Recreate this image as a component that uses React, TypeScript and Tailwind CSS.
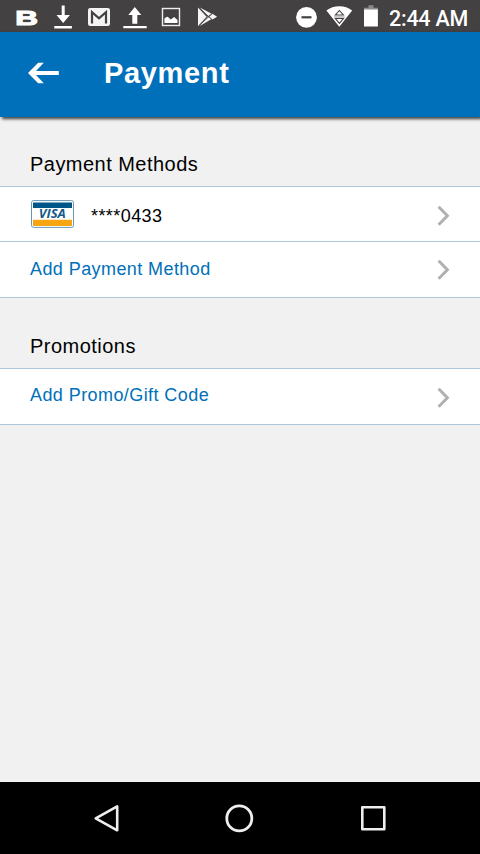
import React from "react";

function StatusBar() {
  return (
    <div className="flex h-8 shrink-0 items-center bg-[#434141] text-white">
      <div className="ml-[15px] flex h-8 w-[24px] items-center justify-center pt-[3px]">
        <span className="inline-block scale-x-[1.5] font-['Liberation_Sans',sans-serif] text-[21px] leading-8 font-bold [-webkit-text-stroke:1.1px_white]">B</span>
      </div>
      <svg className="ml-[14px] shrink-0" width="20" height="32" viewBox="53 0 20 32" fill="#fff">
        <path d="M61.7 5.5h3v9.5h5.2L63.2 23l-6.7-8h5.2zM54.3 26h17.6v2.4H54.3z" />
      </svg>
      <svg className="ml-[14px] shrink-0" width="25" height="32" viewBox="87 0 25 32" fill="none">
        <rect x="88" y="8" width="22" height="18" rx="2.2" fill="#f4f4f4" />
        <path d="M92 23.6V12.2l7 6.2 7-6.2v11.4" stroke="#434141" strokeWidth="2.2" />
      </svg>
      <svg className="ml-[10px] shrink-0" width="26" height="32" viewBox="122 0 26 32" fill="#fff">
        <path d="M134.8 7l6.5 8h-4v8.7h-5V15h-4zM123.3 26h23.4v2.3h-23.4z" />
      </svg>
      <svg className="ml-[13px] shrink-0" width="20" height="32" viewBox="161 0 20 32">
        <rect x="162.5" y="8.5" width="17" height="17" fill="none" stroke="#eee" strokeWidth="1.4" />
        <path d="M164.4 23v-4.5l1.7-1.2 1.6-.6 3 2.8 3.5-2.5 3.3 3V23z" fill="#fff" />
      </svg>
      <svg className="ml-[16px] shrink-0" width="21" height="32" viewBox="197 0 21 32" fill="none">
        <path d="M198 7.5l8.6 9.2-8.6 9.6z" fill="#f5f5f5" />
        <path d="M199.7 7.5l12 6.3-3.8 2.4zM199.7 26l12-7-3.8-2.5zM209 16.6l3.5-2.8 4.6 2.9-4.6 2.7z" fill="#f5f5f5" />
        <path d="M199 7.8l13.2 12M199 25.6l13.2-12" stroke="#434141" strokeWidth="0.9" />
      </svg>
      <svg className="ml-[78px] shrink-0" width="22" height="32" viewBox="296 0 22 32">
        <circle cx="306.5" cy="17.3" r="10.4" fill="#fff" />
        <path d="M301.5 17.3h10" stroke="#434141" strokeWidth="2.2" />
      </svg>
      <svg className="ml-[8px] shrink-0" width="28" height="32" viewBox="326 0 28 32">
        <path d="M326.4 10.5c7-5.8 18.8-5.8 25.8 0l-12.9 16.3z" fill="#fff" />
        <path d="M335.4 15h8l-4-4.5zM335.2 18.4h8.4l-4.2 5z" fill="none" stroke="#434141" strokeWidth="1.1" />
        <path d="M334 16.7h10.6" stroke="#bbb" strokeWidth="1" />
      </svg>
      <svg className="ml-[9px] shrink-0" width="16" height="32" viewBox="363 0 16 32">
        <path d="M368.5 5.3h5v2.4h4.4v2.5H364V7.7h4.5z" fill="#8b8a8a" />
        <path d="M364 9.5h13.9v17H364z" fill="#fff" />
      </svg>
      <span className="ml-[10px] mt-[5px] whitespace-nowrap font-['Roboto',sans-serif] text-[21.5px] leading-8 font-medium tracking-[-0.25px]">2:44 AM</span>
    </div>
  );
}

function VisaCard() {
  return (
    <svg className="mr-[16px] shrink-0" width="44" height="28" viewBox="0 0 44 28" role="img" aria-label="Visa">
      <rect x="0.5" y="0.6" width="42" height="26.8" rx="2" fill="#fff" stroke="#6896b5" strokeWidth="1" />
      <path d="M2 2.5h39v5.5H2z" fill="#005689" />
      <path d="M2 19.7h39v6.3H2z" fill="#f8a513" />
      <text x="7.8" y="18.1" fontFamily="Open Sans, sans-serif" fontSize="12" fontWeight="700" fontStyle="italic" fill="#145b89" letterSpacing="0" textLength="27" lengthAdjust="spacingAndGlyphs">VISA</text>
    </svg>
  );
}

function Chevron({ className = "" }: { className?: string }) {
  return (
    <svg className={`ml-auto shrink-0 ${className}`} width="14" height="22" viewBox="0 0 14 22" fill="none">
      <path d="M1.6 1.8l8.8 9-8.8 9" stroke="#b0b0b0" strokeWidth="3" />
    </svg>
  );
}

export default function App() {
  return (
    <div className="flex h-[854px] w-[480px] flex-col overflow-hidden bg-[#f1f1f1] font-['Liberation_Sans',Arial,sans-serif]">
      <StatusBar />
      <header className="flex h-[85px] shrink-0 items-center bg-[#0070ba] pb-[4px] pl-[28px] text-white shadow-[2px_2px_3px_rgba(0,0,0,0.75)]">
        <svg className="shrink-0" width="32" height="22" viewBox="0 0 32 22">
          <path d="M10.2.8h5.6L8 9h22.8v4H8l7.8 8.2h-5.6L0 11z" fill="#fff" />
        </svg>
        <h1 className="ml-[44px] text-[29px] leading-10 font-bold tracking-[0.65px]">Payment</h1>
      </header>
      <main className="grow text-[18px] tracking-[0.42px]">
        <h2 className="h-[69px] pt-[32px] pl-[30px] text-[20px] leading-[30px] tracking-[0.47px] text-black">Payment Methods</h2>
        <div className="border-y border-[#abc9da] bg-white">
          <div className="flex h-[54px] items-center pr-[29px] pl-[31px] text-black">
            <VisaCard />
            <span className="mt-[4px]">****0433</span>
            <Chevron className="mt-[3px]" />
          </div>
          <div className="flex h-[56px] items-center border-t border-[#abc9da] pr-[29px] pl-[30px] text-[#0070ba]">
            <span>Add Payment Method</span>
            <Chevron />
          </div>
        </div>
        <h2 className="h-[70px] pt-[33px] pl-[30px] text-[20px] leading-[30px] tracking-[0.47px] text-black">Promotions</h2>
        <div className="flex h-[57px] items-center border-y border-[#abc9da] bg-white pr-[29px] pl-[30px] text-[#0070ba]">
          <span className="mb-[3px]">Add Promo/Gift Code</span>
          <Chevron className="mt-[3px]" />
        </div>
      </main>
      <nav className="flex h-[72px] shrink-0 items-center bg-black pl-[93px]">
        <svg width="28" height="30" viewBox="0 0 28 30" fill="none" stroke="#eee" strokeWidth="2.6" strokeLinejoin="round">
          <path d="M24.2 3.3v24L2.7 15.4z" />
        </svg>
        <svg className="ml-[103px]" width="30" height="30" viewBox="0 0 30 30" fill="none" stroke="#eee" strokeWidth="2.8">
          <circle cx="15.3" cy="15.4" r="12.5" />
        </svg>
        <svg className="ml-[106px]" width="28" height="30" viewBox="0 0 28 30" fill="none" stroke="#eee" strokeWidth="2.6" strokeLinejoin="round">
          <rect x="2.3" y="4.3" width="22" height="22" />
        </svg>
      </nav>
    </div>
  );
}
